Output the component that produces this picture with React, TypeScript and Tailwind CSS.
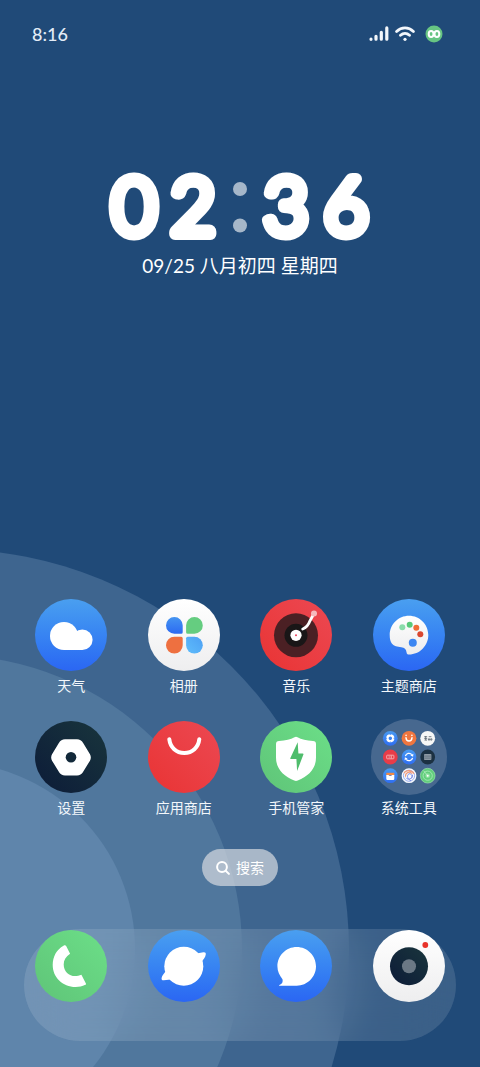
import type { FC, ReactNode } from "react";

interface AppItem {
  name: string;
  tone: string;
  glyph: ReactNode;
}

const BLUE = "bg-linear-to-b from-[#4a9ff0] to-[#2b66f3]";
const RED = "bg-linear-to-bl from-[#ec4852] to-[#e93333]";
const GREEN = "bg-linear-to-bl from-[#6cdf88] to-[#5fc478]";
const WHITE = "bg-linear-to-b from-white to-[#eeeeef]";
const DARK = "bg-linear-to-bl from-[#19353c] to-[#0d1b38]";

const Glyph: FC<{ children: ReactNode }> = ({ children }) => (
  <svg viewBox="0 0 72 72" className="size-full" fill="none" aria-hidden="true">
    {children}
  </svg>
);

const Weather = () => (
  <Glyph>
    <g fill="#fff">
      <circle cx="29" cy="37" r="14" />
      <circle cx="47.3" cy="40.7" r="10.3" />
      <path d="M29 37h18.300v14H29z" />
    </g>
  </Glyph>
);

const Album = () => (
  <Glyph>
    <defs>
      <linearGradient id="petal-blue" x1="0" y1="0" x2="0" y2="1">
        <stop stopColor="#4594f1" />
        <stop offset="1" stopColor="#2c6af2" />
      </linearGradient>
      <linearGradient id="petal-sky" x1="1" y1="0" x2="0" y2="1">
        <stop stopColor="#4da0f4" />
        <stop offset="1" stopColor="#5fbdfb" />
      </linearGradient>
    </defs>
    <path d="M26.400 18a8.300 8.300 0 0 1 8.300 8.300v7a1.500 1.500 0 0 1-1.500 1.500h-6.800a8.400 8.400 0 0 1 0-16.800z" fill="url(#petal-blue)" />
    <path d="M46.400 18a8.300 8.300 0 0 0-8.300 8.300v7a1.500 1.500 0 0 0 1.500 1.500h6.800a8.400 8.400 0 0 0 0-16.800z" fill="#65cd80" />
    <path d="M26.400 54.600a8.300 8.300 0 0 0 8.300-8.300v-7a1.500 1.500 0 0 0-1.500-1.500h-6.800a8.400 8.400 0 0 0 0 16.800z" fill="#ee7040" />
    <path d="M46.400 54.600a8.300 8.300 0 0 1-8.300-8.300v-7a1.500 1.500 0 0 1 1.500-1.500h6.800a8.400 8.400 0 0 1 0 16.800z" fill="url(#petal-sky)" />
  </Glyph>
);

const Music = () => (
  <Glyph>
    <circle cx="36" cy="36.300" r="22" fill="#4b2024" />
    <circle cx="36" cy="36.300" r="11.500" fill="#191617" />
    <circle cx="36" cy="36.300" r="5.600" fill="#fff" />
    <circle cx="36" cy="36.300" r="1" fill="#e9405c" />
    <path d="M42.700 30c4.300-1.500 6-4.600 7.300-8.200L54 14.500" stroke="#fff" strokeWidth="2.800" strokeLinecap="round" />
    <circle cx="54" cy="14.600" r="3" fill="#f6b9bd" />
  </Glyph>
);

const Theme = () => (
  <Glyph>
    <defs>
      <linearGradient id="palette" x1="0" y1="0" x2="0" y2="1">
        <stop stopColor="#fff" />
        <stop offset="1" stopColor="#ececee" />
      </linearGradient>
    </defs>
    <path
      d="M36 16.800c10.700 0 19.300 8.600 19.300 19.300S46.700 55.600 36 55.600c-1.600 0-2.200-.5-2.400-2-.4-3.400-2-4.700-5.300-5.300-4-.5-7.300-1.200-9.300-3.500-1.600-2-2.300-5-2.300-8.700 0-10.700 8.600-19.300 19.300-19.300z"
      fill="url(#palette)"
    />
    <circle cx="29.300" cy="28.300" r="3" fill="#8bdcab" />
    <circle cx="36.700" cy="25.700" r="3" fill="#58c979" />
    <circle cx="43.300" cy="28.800" r="3" fill="#ef6c35" />
    <circle cx="47.300" cy="35.300" r="3" fill="#d9472f" />
    <circle cx="39.800" cy="43.800" r="4" fill="#3c86f2" />
  </Glyph>
);

const Settings = () => (
  <Glyph>
    <path
      d="M30 20.300h12a5 5 0 0 1 4.300 2.500l6.800 11.100a5 5 0 0 1 0 5L46.300 50a5 5 0 0 1-4.300 2.500H30a5 5 0 0 1-4.300-2.500l-6.800-11.100a5 5 0 0 1 0-5l6.800-11.100a5 5 0 0 1 4.300-2.500z"
      fill="#fff"
      stroke="#fff"
      strokeWidth="4"
    />
    <circle cx="36" cy="36.300" r="5.300" fill="#12293a" />
  </Glyph>
);

const AppStore = () => (
  <Glyph>
    <path d="M21.300 18.300c1 8.300 7 13.600 15 13.600s14-5.300 15-13.600" stroke="#fff" strokeWidth="4" strokeLinecap="round" />
  </Glyph>
);

const PhoneManager = () => (
  <Glyph>
    <path
      d="M36 15.800c.6 0 1 .2 1.500.5 3.900 2.200 8.900 3.200 15.500 3.600 2 .1 3 1.100 3 3v13.500c0 11.600-7.500 18.600-18.200 23.200-1.200.5-2.400.5-3.600 0C23.500 55 16 48 16 36.400V22.900c0-1.900 1-2.900 3-3 6.600-.4 11.600-1.400 15.500-3.600.5-.3.900-.5 1.500-.5z"
      fill="#fff"
    />
    <path d="M37.700 21.300 30.400 37c-.3.600 0 1 .6 1h5.400l.7 12L43.400 33.600c.3-.7 0-1.100-.7-1.100h-4.300z" fill="#4fbd6c" />
  </Glyph>
);

const Phone = () => (
  <Glyph>
    <path
      d="M28.500 15.700c1.200-.8 2.200-.6 2.800.5l3.800 7.500c-4.200 2.700-6.400 6.200-6.400 10.800 0 7 5.300 11.600 11.300 11.600 2.300 0 4.300-.4 6.400-1.300l4.500 8.600c.3.700 0 1.200-.6 1.400-3 1.500-6.300 2.200-9.600 2.200-13.300 0-23-9.700-23-22 0-8.700 4-15.400 10.800-19.300z"
      fill="#fff"
    />
  </Glyph>
);

const Browser = () => (
  <Glyph>
    <g fill="#fff">
      <circle cx="35.800" cy="36.200" r="19.500" />
      <path d="M43 24.500c5-1 9-1.300 12.300-2.200 1.800-.4 2.700.6 2.500 2-.4 3.200-2.300 5-4.200 7.400z" />
      <path d="M17.500 41.500c-1.800 2.300-3.400 4.200-3.900 6.500-.3 1.600.6 2.500 2.200 2.300 3.200-.3 6.200-1 10.200-1z" />
    </g>
  </Glyph>
);

const Message = () => (
  <Glyph>
    <path
      d="M36.700 17C47.400 17 56 25.600 56 36.300S47.400 55.700 36.700 55.700H19.600c-.7 0-.7-.5-.2-.8 2.900-1.200 3.700-3 3.100-5.700-3-3.800-5.100-7.800-5.100-12.900C17.400 25.600 26 17 36.700 17z"
      fill="#fff"
    />
  </Glyph>
);

const Camera = () => (
  <Glyph>
    <defs>
      <linearGradient id="lens" x1="1" y1="0" x2="0" y2="1">
        <stop stopColor="#19353c" />
        <stop offset="1" stopColor="#0d1b38" />
      </linearGradient>
    </defs>
    <circle cx="36" cy="36.200" r="19" fill="url(#lens)" />
    <circle cx="36" cy="36.200" r="7" fill="#6b7885" />
    <circle cx="52.300" cy="15" r="2.900" fill="#e8332a" />
  </Glyph>
);

// 文件夹内的九个小图标
const ToolsFolder = () => (
  <svg viewBox="0 0 76 76" className="size-full" fill="none" aria-hidden="true">
    <defs>
      <linearGradient id="mini-blue" x1="0" y1="0" x2="0" y2="1">
        <stop stopColor="#489af1" />
        <stop offset="1" stopColor="#2f6ef2" />
      </linearGradient>
    </defs>
    <g transform="translate(19.300 19.300)">
      <circle r="7.400" fill="url(#mini-blue)" />
      <circle r="2.900" stroke="#fff" strokeWidth="2.400" />
      <path d="M0-4.600v1.400M0 3.200v1.400M-4.600 0h1.400M3.200 0h1.400" stroke="#3b82f1" strokeWidth=".8" />
    </g>
    <g transform="translate(38 19.300)">
      <circle r="7.400" fill="#f0763f" />
      <path d="M-3-.5c.3 4.400 5.700 4.400 6 0" stroke="#fff" strokeWidth="1.500" strokeLinecap="round" />
      <circle cx="-2.900" cy="-2.900" r=".8" fill="#fff" />
      <circle cx="2.900" cy="-2.900" r=".8" fill="#fff" />
    </g>
    <g transform="translate(56.700 19.300)">
      <circle r="7.400" fill="#f7f7f6" />
      <path d="M-3.500-1.600h3M-3.500.1h3M-3.200 1.800h2.500M-2-2.300v4M1-1.600h2.700M.7.500h1.200v1.300H.7zM3 .5h1.200v1.300H3z" stroke="#59636e" strokeWidth=".8" />
    </g>
    <g transform="translate(19.300 38)">
      <circle r="7.400" fill="#e93c48" />
      <rect x="-3.600" y="-1.800" width="7.200" height="3.600" rx=".6" stroke="#f7b4b8" strokeWidth=".9" />
      <path d="M-1.800 0H0M1-1.500v3" stroke="#f7b4b8" strokeWidth=".9" />
    </g>
    <g transform="translate(38 38)">
      <circle r="7.400" fill="url(#mini-blue)" />
      <path d="M-3.600-.8A3.700 3.700 0 0 1 2.800-2.400M3.600.8A3.700 3.700 0 0 1-2.800 2.400" stroke="#fff" strokeWidth="1.300" />
      <path d="m4.400-3.300-.3 3-2.700-1.300zM-4.400 3.300l.3-3 2.700 1.300z" fill="#fff" />
    </g>
    <g transform="translate(56.700 38)">
      <circle r="7.400" fill="#1c3142" />
      <rect x="-3.700" y="-3.100" width="7.400" height="6.200" rx=".8" fill="#8d99a3" />
      <path d="M-3.700-.9h7.400M-3.700 1.100h7.400" stroke="#4b5d6b" strokeWidth=".6" />
    </g>
    <g transform="translate(19.300 56.700)">
      <circle r="7.400" fill="url(#mini-blue)" />
      <rect x="-4" y="-2.900" width="8" height="2.500" fill="#f08a45" />
      <path d="M-4-.8h2.300C-1.300.7 1.300.7 1.700-.8H4v4.200a.8.800 0 0 1-.8.800h-6.400a.8.800 0 0 1-.8-.8z" fill="#fff" />
    </g>
    <g transform="translate(38 56.700)">
      <circle r="7.400" fill="#f8f9fd" />
      <circle r="5.600" stroke="#8fa6ea" strokeWidth=".9" />
      <path d="M-5-2.500C-3-6 3-6 5-2M-3.500 1C-4-3 1-5 3-2" stroke="#f09a78" strokeWidth="1.100" />
      <path d="M3.500-1C4 3-1 5-3 2M0-2C-3 0-1 4 2 5M0-2C3-2 4 1 2 3" stroke="#6f86e6" strokeWidth=".9" />
    </g>
    <g transform="translate(56.700 56.700)">
      <circle r="7.400" fill="#62ce7c" stroke="#a5e6b3" strokeWidth=".6" />
      <circle r="4.600" stroke="#a6e8b4" strokeWidth=".9" />
      <circle r="2.400" fill="#8fe0a1" />
      <circle r="1" fill="#fff" />
      <path d="m-1-1-3-4" stroke="#d4f5da" strokeWidth=".6" />
    </g>
  </svg>
);

const apps: AppItem[] = [
  { name: "天气", tone: BLUE, glyph: <Weather /> },
  { name: "相册", tone: WHITE, glyph: <Album /> },
  { name: "音乐", tone: RED, glyph: <Music /> },
  { name: "主题商店", tone: BLUE, glyph: <Theme /> },
  { name: "设置", tone: DARK, glyph: <Settings /> },
  { name: "应用商店", tone: RED, glyph: <AppStore /> },
  { name: "手机管家", tone: GREEN, glyph: <PhoneManager /> },
];

const dockApps: AppItem[] = [
  { name: "电话", tone: GREEN, glyph: <Phone /> },
  { name: "浏览器", tone: BLUE, glyph: <Browser /> },
  { name: "信息", tone: BLUE, glyph: <Message /> },
  { name: "相机", tone: WHITE, glyph: <Camera /> },
];

const Wallpaper = () => (
  <svg viewBox="0 0 349 516" className="absolute bottom-0 left-0 h-[516px] w-[349px]" aria-hidden="true">
    <circle cx="-52" cy="399" r="401" fill="#3e658f" />
    <circle cx="-52" cy="398" r="294" fill="#50779d" />
    <circle cx="-52" cy="398" r="187" fill="#5f85ab" />
  </svg>
);

const StatusBar = () => (
  <header className="flex h-17 items-center justify-between pr-[37px] pl-8 text-[#e3ecf7]">
    <time className="text-lg leading-6 font-medium">8:16</time>
    <div className="flex items-center gap-[6px]">
      <svg viewBox="0 0 20 16" className="h-4 w-5" fill="none" stroke="#f3f7fb" strokeWidth="3.200" strokeLinecap="round" aria-hidden="true">
        <path d="M2 13.200v.1M7 10.300v2.900M12.300 6.300v6.900M17.800 1.900v11.300" />
      </svg>
      <svg viewBox="0 0 20 16" className="h-4 w-5" fill="none" stroke="#f3f7fb" strokeWidth="2.800" strokeLinecap="round" aria-hidden="true">
        <path d="M1.600 5.500C6.400.700 13.600.700 18.400 5.500M5.500 9.300c2.700-2.500 6.300-2.500 9 0" />
        <circle cx="10" cy="13.300" r="1.600" fill="#f3f7fb" stroke="none" />
      </svg>
      <svg viewBox="0 0 18 18" className="ml-1 size-[18px]" fill="none" aria-hidden="true">
        <circle cx="9" cy="9" r="8.500" fill="#67c583" />
        <ellipse cx="6.100" cy="9" rx="2.400" ry="2.900" stroke="#fff" strokeWidth="2" />
        <ellipse cx="11.900" cy="9" rx="2.400" ry="2.900" stroke="#fff" strokeWidth="2" />
      </svg>
    </div>
  </header>
);

const Clock = () => (
  <section className="mt-[104px] flex flex-col items-center text-white">
    <svg viewBox="0 0 260 68" className="h-[68px] w-[260px] overflow-visible" role="img" aria-label="02:36">
      <g
        className="font-['Lato'] text-[77px] font-light"
        fill="#fff"
        stroke="#fff"
        strokeWidth="12"
        strokeLinejoin="round"
        textAnchor="middle"
      >
        <text x="24" y="62">0</text>
        <text x="83" y="62">2</text>
        <text x="176" y="62">3</text>
        <text x="236" y="62">6</text>
      </g>
      <circle cx="130" cy="17" r="7" fill="#a6b7c9" />
      <circle cx="130" cy="53.500" r="7" fill="#a6b7c9" />
    </svg>
    <p className="mt-3 text-[19px] leading-7">09/25 八月初四 星期四</p>
  </section>
);

const App: FC = () => {
  return (
    <main className="relative flex min-h-screen flex-col overflow-hidden bg-[#204a78] font-['Lato','Noto_Sans_CJK_SC',sans-serif]">
      <Wallpaper />

      <div className="relative flex flex-1 flex-col">
        <StatusBar />
        <Clock />

        {/* 应用图标 */}
        <div className="mt-auto grid grid-cols-4 gap-y-6 px-[15px]">
          {apps.map((app) => (
            <button key={app.name} type="button" className="flex flex-col items-center gap-1">
              <span className={`size-18 overflow-hidden rounded-full ${app.tone}`}>{app.glyph}</span>
              <span className="text-sm leading-[22px] text-[#f3f7fb]">{app.name}</span>
            </button>
          ))}
          <button type="button" className="flex flex-col items-center gap-1">
            <span className="-my-0.5 size-[76px] rounded-full bg-[#47688f]">
              <ToolsFolder />
            </span>
            <span className="text-sm leading-[22px] text-[#f3f7fb]">系统工具</span>
          </button>
        </div>

        {/* 搜索 */}
        <button
          type="button"
          className="mt-[30px] flex h-[37px] items-center gap-[6px] self-center rounded-full bg-[#d6dadf]/70 px-[14px] text-sm text-white"
        >
          <svg viewBox="0 0 14 14" className="size-[14px]" fill="none" stroke="currentColor" strokeWidth="2" strokeLinecap="round" aria-hidden="true">
            <circle cx="6" cy="6" r="4.900" />
            <path d="m9.700 9.700 3.200 3.200" />
          </svg>
          搜索
        </button>

        {/* 底部 Dock */}
        <nav className="mx-6 mt-[43px] mb-[26px] flex h-28 items-start justify-between rounded-full bg-white/12 px-[11px] pt-px backdrop-blur-xl">
          {dockApps.map((app) => (
            <button
              key={app.name}
              type="button"
              aria-label={app.name}
              className={`size-18 overflow-hidden rounded-full ${app.tone}`}
            >
              {app.glyph}
            </button>
          ))}
        </nav>
      </div>
    </main>
  );
};

export default App;
